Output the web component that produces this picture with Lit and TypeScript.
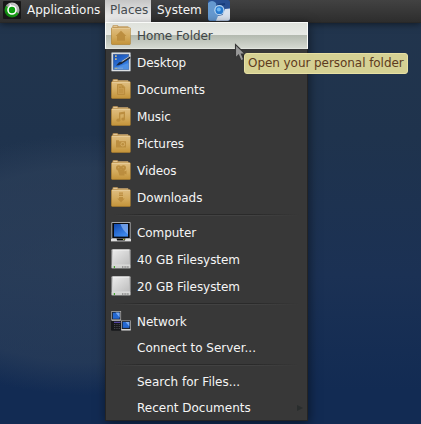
import { LitElement, html, svg, css, nothing } from "lit";
import { customElement, property } from "lit/decorators.js";

const glyphs: Record<string, unknown> = {
  home: svg`<path d="M10 5.8 15.3 11H14V15.7H6V11H4.7Z"/>`,
  documents: svg`<path fill="#c89b4d" stroke="#b98b3c" stroke-width="1" d="M6.5 5.5H11L13.6 8.2V15.5H6.5Z"/><path d="M8 7.5h2v1.5H8zM8 10.5h4v1H8zM8 12.6h4v1H8zM10.5 6V9H13.5Z"/>`,
  music: svg`<path d="M8 6.5 14 5.5V13H12.7V8L9.3 8.6V14H8Z"/><ellipse cx="7.4" cy="14.2" rx="2" ry="1.6"/><ellipse cx="12.2" cy="13.1" rx="1.9" ry="1.6"/>`,
  pictures: svg`<path d="M5 7.2h3v1h7V14.6H5Z"/><circle cx="11.8" cy="11.2" r="2.3" fill="#d6ae64"/><circle cx="11.8" cy="11.2" r="1.3"/>`,
  videos: svg`<circle cx="7.6" cy="7.8" r="2.6"/><circle cx="12.4" cy="7.8" r="2.6"/><path d="M6.5 9.5h7v2l2-1v4l-2-.9v1.9h-5Z"/><g fill="#cba055"><circle cx="7.6" cy="7.6" r=".8"/><circle cx="12.4" cy="7.6" r=".8"/></g>`,
  downloads: svg`<path d="M8 5.5h4v1.2H8zM8 7.6h4V9H8zM8 10h4v1.5H13.7L10 15.4 6.3 11.5H8Z"/>`,
};

const folder = (name: string) => svg`
  <defs><linearGradient id="f" x2="0" y2="1"><stop stop-color="#dfbd80"/><stop offset=".55" stop-color="#d3aa5c"/><stop offset="1" stop-color="#c4943b"/></linearGradient></defs>
  <path d="M1.5 4V1Q1.5.2 2.4.2H6.3Q7.2.2 7.4 1.3H16.6Q17.6 1.3 17.6 2.4V4Z" fill="#b78b48"/>
  <path d="M2.3.8H6.2L6.8 2H2.3Z" fill="#e2c797"/>
  <path d="M7.4 2.1H17" stroke="#e8dcc3" stroke-width=".6"/>
  <rect x=".2" y="2.4" width="19.4" height="17.4" rx="1" fill="#a87b2b"/>
  <rect x=".7" y="2.8" width="18.5" height="16.4" rx=".6" fill="url(#f)"/>
  <path d="M1 3.3H19" stroke="#ead2a5" stroke-width=".8"/>
  <g fill="#b98b3c" opacity=".9">${glyphs[name]}</g>`;

const screenDefs = svg`<defs><linearGradient id="s" x2=".6" y2="1"><stop stop-color="#1148ae"/><stop offset="1" stop-color="#3d88ec"/></linearGradient>
  <linearGradient id="g" x2="1" y2="1"><stop stop-color="#ededed"/><stop offset="1" stop-color="#bcbcbc"/></linearGradient></defs>`;

const icons: Record<string, unknown> = {
  desktop: svg`${screenDefs}<rect x=".2" y=".2" width="19.6" height="19.4" rx="1" fill="#8d949b"/><rect x=".8" y=".8" width="18.4" height="18.2" fill="#dcdfe2"/>
    <rect x="2.2" y="2.2" width="15.6" height="15.4" fill="url(#s)" stroke="#4b5f80" stroke-width=".5"/>
    <path d="M3 17.3Q10 13 17.5 11V17.3Z" fill="#4e90e4"/><path d="M4 3.2h1.7v1.7H4zM4 6.2h1.7v1.7H4z" fill="#c5b886"/><path d="M3.5 16.2h3" stroke="#d0bf80"/><path d="M7 16.2h5" stroke="#7ea6d8"/>
    <path d="M5 13.6 8.3 10 11.3 11.6 7.8 13.3Z" fill="#1b2940"/><path d="M9.5 11.4 19 5" stroke="#1c2737" stroke-width="2.2"/><path d="M10.6 9.6 19.6 3.7" stroke="#c1c9d0" stroke-width="1"/>`,
  computer: svg`${screenDefs}<path d="M.8.5H19.2V16.6H.8Z" fill="#090b10" stroke="#b7b7b7" stroke-width=".9"/>
    <rect x="3" y="2" width="14" height="12.6" fill="url(#s)"/><path d="M9.4 2H17V12.5Q11.5 8 9.4 2Z" fill="#8bb4f2" opacity=".7"/>
    <path d="M0 16.8H20V19.4H0Z" fill="#dedede"/><path d="M5.5 16.4H14.5L13.8 18.6H6.2Z" fill="#080808"/><path d="M12 17.5h1.5" stroke="#b9c72b"/>`,
  drive: svg`${screenDefs}<rect x=".3" y=".2" width="19.4" height="19.4" rx="1" fill="#9b9b9b"/>
    <path d="M1.6.8H18.4L19 15.8H1Z" fill="url(#g)"/><path d="M1.6 1H18.4" stroke="#fafafa" stroke-width=".8"/>
    <rect x=".8" y="16" width="18.4" height="3.1" fill="#d0d1cf"/><path d="M1 15.9H19" stroke="#eee" stroke-width=".7"/>
    <path d="M3.4 17v1.9" stroke="#44a52e" stroke-width="1.2"/><path d="M11 17.9h7" stroke="#858585" stroke-width="1.5" stroke-dasharray="1 .6"/>`,
  network: svg`${screenDefs}<rect x="0" y="9.6" width="10.5" height="10.1" rx="1" fill="#17181b"/>
    <path d="M3 11.3h6.5" stroke="#6552c4"/><path d="M3 13.5h6M3 15.5h6M3 17.5h6" stroke="#44454c" stroke-dasharray="1 .7"/>
    <rect x=".7" y=".5" width="9" height="8.6" fill="#10131a" stroke="#aaa" stroke-width=".8"/><rect x="1.8" y="1.6" width="6.8" height="6.2" fill="#2468d2"/><path d="M4.5 1.6h4.1v4.9Z" fill="#78a9f0"/><path d="M1 9.1h8.5" stroke="#ccc"/>
    <rect x="10.5" y="9.8" width="9" height="8.5" fill="#10131a" stroke="#aaa" stroke-width=".8"/><rect x="11.6" y="10.9" width="6.8" height="6" fill="#2468d2"/><path d="M14.5 10.9h3.9v4.7Z" fill="#78a9f0"/><path d="M10.3 18.8h9.4" stroke="#ddd" stroke-width="1.4"/>`,
};

@customElement("place-icon")
class PlaceIcon extends LitElement {
  @property() name = "";
  static styles = css`
    :host { display: block; width: 20px; height: 20px; }
    svg { display: block; }
  `;
  render() {
    return html`<svg width="20" height="20" viewBox="0 0 20 20">${this.name in glyphs ? folder(this.name) : icons[this.name]}</svg>`;
  }
}

type Entry = { label: string; icon?: string; active?: boolean; submenu?: boolean } | null;

const entries: Entry[] = [
  { label: "Home Folder", icon: "home", active: true },
  { label: "Desktop", icon: "desktop" },
  { label: "Documents", icon: "documents" },
  { label: "Music", icon: "music" },
  { label: "Pictures", icon: "pictures" },
  { label: "Videos", icon: "videos" },
  { label: "Downloads", icon: "downloads" },
  null,
  { label: "Computer", icon: "computer" },
  { label: "40 GB Filesystem", icon: "drive" },
  { label: "20 GB Filesystem", icon: "drive" },
  null,
  { label: "Network", icon: "network" },
  { label: "Connect to Server..." },
  null,
  { label: "Search for Files..." },
  { label: "Recent Documents", submenu: true },
];

@customElement("app-root")
class AppRoot extends LitElement {
  static styles = css`
    :host {
      display: block; position: relative; width: 421px; height: 424px; overflow: hidden;
      font: 12px/16px "DejaVu Sans", sans-serif; color: #f5f5f5;
      background:
        radial-gradient(ellipse 210px 130px at 85px 265px, rgba(50, 68, 90, .6), rgba(50, 68, 92, .5) 75%, transparent),
        linear-gradient(180deg, #22354d 0, #1f334d 32%, #1b3154 65%, #122b53 92%);
    }
    .panel {
      position: relative; box-sizing: border-box; display: flex; height: 23px;
      background: linear-gradient(#424242, #2d2d2d); border-bottom: 1px solid #282828;
      box-shadow: 0 1px 7px rgba(0, 0, 0, .55);
    }
    .logo { margin: 1px 6px 0 3px; width: 18px; height: 18px; }
    .title { height: 22px; line-height: 20px; white-space: nowrap; }
    .apps { width: 78px; }
    .places { width: 41px; padding-left: 5px; color: #454b50; background: linear-gradient(#c5c5c5, #e3e3e3 60%, #fafafa); }
    .system { width: 51px; padding-left: 6px; }
    .browser { width: 22px; height: 21px; }
    .menu {
      position: absolute; left: 105px; top: 22px; box-sizing: border-box; width: 203px; height: 399px;
      background: #383838; border: solid #242424; border-width: 0 1px 1px;
      box-shadow: 1px 2px 10px rgba(0, 0, 0, .5);
    }
    .row { display: flex; align-items: center; height: 27px; padding-left: 5px; }
    .row.plain { height: 26px; padding-left: 31px; }
    .row.active {
      box-sizing: border-box; margin: 0 -1px; padding-left: 5px; color: #404648; border: 1px solid #fafbf9;
      border-bottom-color: #e2e5df;
      background: linear-gradient(#dfe2dc 0, #e8eae6 50%, #b4bab0 50%, #d4d8d0 100%);
    }
    place-icon { margin-bottom: 1px; }
    .label { margin-left: 6px; white-space: nowrap; letter-spacing: -.06px; }
    .plain .label { margin-left: 0; letter-spacing: 0; }
    .rule {
      height: 2px; margin: 3px 8px;
      background: linear-gradient(90deg, #383838, transparent 15%, transparent 75%, #383838), linear-gradient(#2a2a2a 50%, #424242 50%);
    }
    .arrow { margin-left: 46px; border: solid transparent; border-width: 3px 0 3px 6px; border-left-color: #292d2d; }
    .cursor { position: absolute; left: 234px; top: 43px; }
    .tip {
      position: absolute; left: 244px; top: 53px; box-sizing: border-box; width: 164px; height: 21px;
      padding-left: 3px; line-height: 19px; white-space: nowrap; letter-spacing: -.06px; color: #5e3b20;
      background: rgba(221, 215, 151, .96); border: 1px solid #e7e0a3; border-radius: 3px;
    }
  `;

  render() {
    return html`
      <div class="panel">
        <svg class="logo" viewBox="0 0 18 18">
          <defs><linearGradient id="l" x1=".8" x2=".2" y2="1"><stop stop-color="#ddd"/><stop offset=".45" stop-color="#999"/><stop offset=".5" stop-color="#20a51c"/><stop offset="1" stop-color="#087608"/></linearGradient></defs>
          <rect width="18" height="18" rx="1" fill="#171717"/><circle cx="9" cy="9" r="7.5" fill="url(#l)"/>
          <circle cx="9" cy="9" r="4" fill="#08a00b" stroke="#fff" stroke-width="1.6"/><path d="M6.5 5 7 2.8 9 4.8Z" fill="#fff"/><circle cx="9" cy="9" r="1.8" fill="#159d13"/>
        </svg>
        <div class="title apps">Applications</div>
        <div class="title places">Places</div>
        <div class="title system">System</div>
        <svg class="browser" viewBox="0 0 22 21">
          <rect width="22" height="21" rx="2" fill="#284f91"/>
          <path d="M0 3Q4-1 8 3L9 11 12 20.7H2Q0 20.7 0 18Z" fill="#6599d0"/>
          <path d="M8 20.7 10 16 14.5 15 17 9 22 8.5V18.5Q22 20.7 19.5 20.7Z" fill="#d9e2ef"/>
          <path d="M10 5 17 4" stroke="#173d7c" stroke-width="2"/>
          <circle cx="11.4" cy="10.2" r="5.1" fill="#b8d5f0"/><circle cx="11.4" cy="10.2" r="3.9" fill="#287bd0"/><circle cx="10.8" cy="9.4" r="2" fill="#6fb7f2"/>
        </svg>
      </div>
      <div class="menu">
        ${entries.map((e) => e
          ? html`<div class="row ${e.active ? "active" : ""} ${e.icon ? "" : "plain"}">
              ${e.icon ? html`<place-icon name=${e.icon}></place-icon>` : nothing}
              <span class="label">${e.label}</span>
              ${e.submenu ? html`<span class="arrow"></span>` : nothing}
            </div>`
          : html`<div class="rule"></div>`)}
      </div>
      <svg class="cursor" width="16" height="22" viewBox="0 0 16 22">
        <path d="M3 4 14 13 10 17Z" fill="#000" opacity=".25"/>
        <path d="M1.5 1.5V15L4.6 12 7 17.7 9.8 16.5 7.4 11H11.3Z" fill="#999" stroke="#363636" stroke-width="1.1"/>
      </svg>
      <div class="tip">Open your personal folder</div>
    `;
  }
}
